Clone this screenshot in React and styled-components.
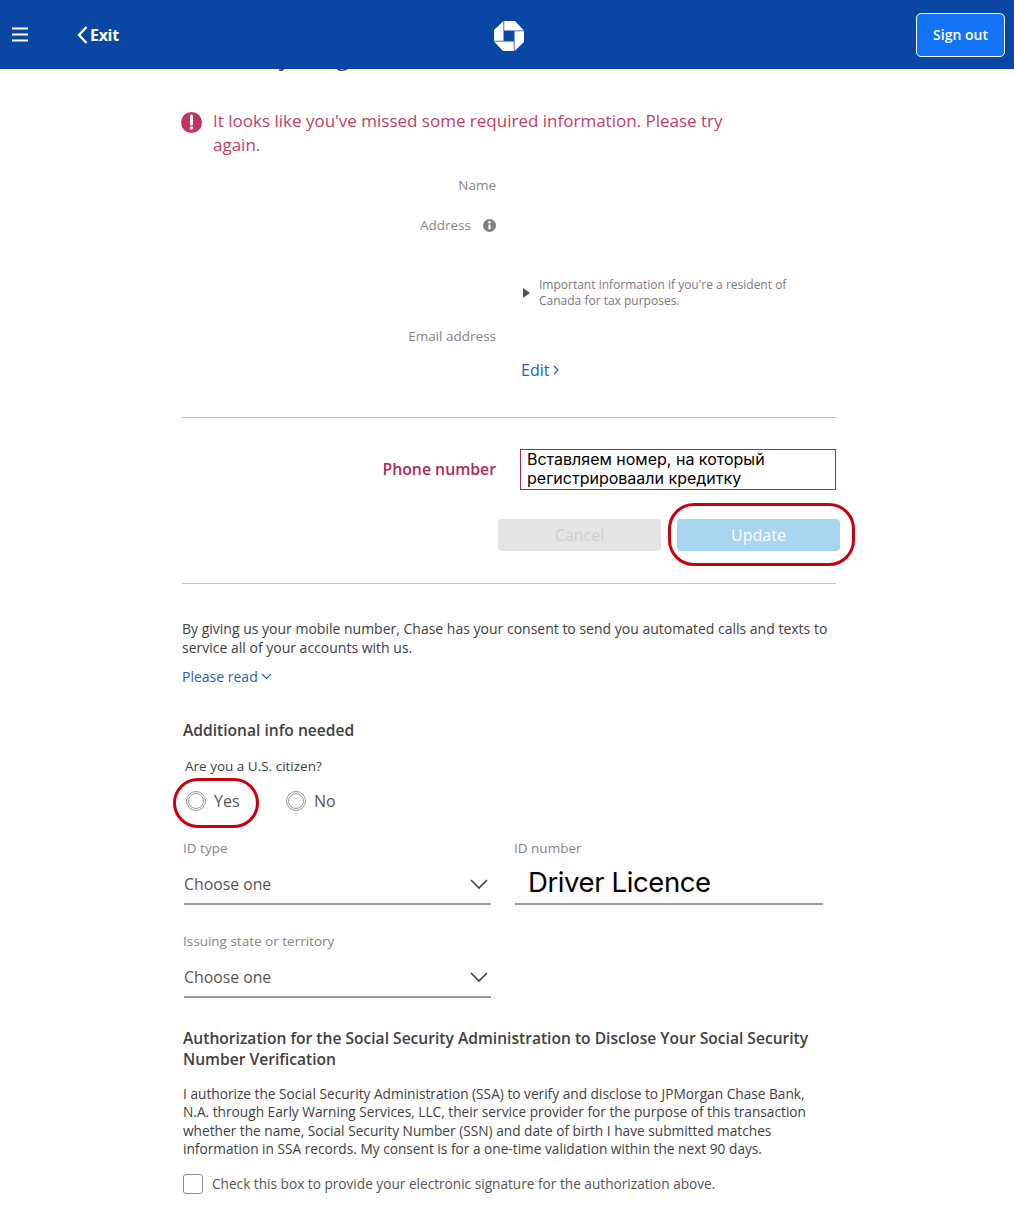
import React from "react";
import styled, { createGlobalStyle } from "styled-components";

const Global = createGlobalStyle`
  html, body { margin: 0; padding: 0; background: #fff; }
  body { font-family: "Open Sans", "Liberation Sans", sans-serif; color: #414042; overflow: hidden; height: 1215px; }
  * { box-sizing: border-box; }
`;

const Header = styled.header`
  position: relative; z-index: 2; height: 69px; background: #0a47a5;
  display: grid; grid-template-columns: 1fr auto 1fr; align-items: center; padding: 0 9px 0 12px;
`;
const HeaderLeft = styled.div`display: flex; align-items: center;`;
const Burger = styled.svg`width: 16px; height: 15px; display: block;`;
const ExitLink = styled.a`
  margin-left: 49px; display: flex; align-items: center; gap: 2px; color: #fff;
  font-size: 16px; font-weight: 700; letter-spacing: -0.3px;
`;
const Logo = styled.svg`width: 30px; height: 30px; display: block; margin-top: 2px;`;
const SignOut = styled.button`
  justify-self: end; width: 89px; height: 44px; background: #1273f5; color: #fff;
  border: 1px solid #fff; border-radius: 5px; font: 600 14px "Open Sans", sans-serif; padding: 0;
`;

const Main = styled.main`width: 654px; margin-left: 182px;`;
const HiddenHeading = styled.h1`
  margin: -30px 0 0; height: 33px; font-size: 24px; line-height: 33px; font-weight: 400; white-space: nowrap; color: #414042;
`;
const ErrorRow = styled.div`display: flex; gap: 11px; margin: 37px 0 0 -1px; width: 560px;`;
const ErrorIcon = styled.svg`width: 21px; height: 21px; flex: none; margin-top: 3px;`;
const ErrorText = styled.p`margin: 0; font-size: 17px; line-height: 24px; color: #bc3f66;`;

const FieldRow = styled.div`
  display: grid; grid-template-columns: 314px 1fr; column-gap: 25px; align-items: center; margin-top: ${p => p.$top}px;
`;
const FieldLabel = styled.div`
  display: flex; justify-content: flex-end; align-items: center; gap: 12px;
  font-size: 13.5px; line-height: 18px; color: #858585;
`;
const InfoIcon = styled.svg`width: 13px; height: 13px; margin-right: 0;`;
const ResidentNote = styled.div`
  display: flex; align-items: center; gap: 9px; margin: 43px 0 0 341px; width: 270px;
  font-size: 12px; line-height: 16px; color: #7a7a7a;
`;
const Triangle = styled.span`
  flex: none; width: 0; height: 0; border-left: 7px solid #505050; border-top: 5.5px solid transparent; border-bottom: 5.5px solid transparent;
`;
const EditLink = styled.a`
  display: flex; align-items: center; gap: 4px; margin: 14px 0 0 339px;
  font-size: 16px; line-height: 22px; color: #2b62a6;
`;
const Rule = styled.hr`border: 0; border-top: 1px solid #c4c4c4; margin: ${p => p.$top}px 0 0;`;
const PhoneRow = styled.div`
  display: grid; grid-template-columns: 314px 316px; column-gap: 24px; align-items: center; margin-top: 31px;
`;
const PhoneLabel = styled.label`text-align: right; font-size: 15.8px; font-weight: 600; color: #ad2a5b; padding-bottom: 2px;`;
const PhoneBox = styled.div`
  height: 41px; border: 1px solid #a02a5c; padding: 0 6px; font-family: Inter, "Noto Sans", sans-serif;
  font-size: 16px; line-height: 19px; color: #000;
`;
const ButtonRow = styled.div`display: flex; gap: 16px; margin: 29px -5px 0 316px;`;
const ActionBtn = styled.button`
  position: relative; width: 163px; height: 32px; border: 0; border-radius: 4px; padding: 0;
  font: 400 16px "Open Sans", sans-serif;
  background: ${p => (p.$primary ? "#a8d5ef" : "#e4e4e4")};
  color: ${p => (p.$primary ? "#fff" : "#cfcfcf")};
`;
const Oval = styled.span`
  position: absolute; border: 3.5px solid #c8010f; pointer-events: none;
  left: ${p => p.$l}px; top: ${p => p.$t}px; width: ${p => p.$w}px; height: ${p => p.$h}px; border-radius: ${p => p.$r}px;
`;
const Consent = styled.p`margin: 35px 0 0; font-size: 14px; line-height: 19px; color: #414042; width: 654px;`;
const ReadMore = styled.a`
  display: flex; align-items: center; gap: 3px; margin-top: 10px; font-size: 14px; line-height: 19px; color: #2b62a6;
`;
const SectionTitle = styled.h2`
  margin: ${p => p.$top}px 0 0 1px; font-size: 15.6px; line-height: 21px; font-weight: 600; color: #414042;
`;
const Question = styled.div`margin: 16px 0 0 3px; font-size: 13.5px; line-height: 18px; color: #414042;`;
const RadioRow = styled.div`display: flex; margin: 14px 0 0 4px; position: relative;`;
const RadioOption = styled.label`
  display: flex; align-items: center; gap: 8px; width: 100px; font-size: 16px; line-height: 24px; color: #555;
`;
const RadioMark = styled.span`
  width: 20px; height: 20px; border-radius: 50%; border: 1px solid #9a9a9a; display: grid; place-items: center;
  &::after { content: ""; width: 14px; height: 14px; border-radius: 50%; border: 1px solid #9a9a9a; }
`;
const TwoCols = styled.div`display: grid; grid-template-columns: 307px 308px; column-gap: 24px; margin: ${p => p.$top}px 0 0 2px;`;
const SelectField = styled.div`display: flex; flex-direction: column;`;
const SmallLabel = styled.div`font-size: 13.5px; line-height: 18px; color: #858585; margin-left: -1px;`;
const SelectBox = styled.div`
  height: 40px; margin-top: 8px; border-bottom: 2px solid #9c9c9c; display: flex; align-items: center; justify-content: space-between;
  padding: 0 3px 0 0; font-size: 15.8px; color: #555;
`;
const TypedBox = styled.div`
  height: 40px; margin-top: 8px; border-bottom: 2px solid #9c9c9c; padding-left: 13px; font-family: Inter, "Noto Sans", sans-serif;
  font-size: 27.5px; line-height: 34px; color: #000; letter-spacing: -0.4px;
`;
const Para = styled.p`margin: 15px 0 0 1px; font-size: 13.7px; line-height: 18.4px; color: #414042; width: 640px;`;
const CheckRow = styled.label`display: flex; align-items: center; gap: 9px; margin: 15px 0 0 1px; font-size: 13.65px; line-height: 20px; color: #555;`;
const CheckBox = styled.span`width: 20px; height: 20px; border: 1px solid #8d8d8d; border-radius: 3px;`;
const Chevron = styled.svg`display: block; flex: none;`;

const SelectChevron = () => (
  <Chevron width="18" height="10" viewBox="0 0 18 10" fill="none" stroke="#3c3c3c" strokeWidth="1.6"><path d="M1 1l8 8 8-8" /></Chevron>
);

export default function App() {
  return (
    <>
      <Global />
      <Header>
        <HeaderLeft>
          <Burger viewBox="0 0 16 15" stroke="#fff" strokeWidth="2"><path d="M0 1.5h16M0 7.5h16M0 13.5h16" /></Burger>
          <ExitLink>
            <Chevron width="11" height="18" viewBox="0 0 11 18" fill="none" stroke="#fff" strokeWidth="2.4"><path d="M9.5 1L2 9l7.5 8" /></Chevron>
            Exit
          </ExitLink>
        </HeaderLeft>
        <Logo viewBox="0 0 30 30" fill="#fff">
          <path d="M10.2 0H21l9 9.5H10.2z" />
          <path d="M30 10.2V21l-9.5 9V10.2z" />
          <path d="M19.8 30H9l-9-9.5h19.8z" />
          <path d="M0 19.8V9l9.5-9v19.8z" />
        </Logo>
        <SignOut>Sign out</SignOut>
      </Header>
      <Main>
        <HiddenHeading>Confirm your general info</HiddenHeading>
        <ErrorRow>
          <ErrorIcon viewBox="0 0 21 21">
            <circle cx="10.5" cy="10.5" r="10.5" fill="#c5325f" />
            <path d="M10.5 4v8" stroke="#fff" strokeWidth="3" strokeLinecap="round" />
            <circle cx="10.5" cy="16" r="1.8" fill="#fff" />
          </ErrorIcon>
          <ErrorText>It looks like you've missed some required information. Please try again.</ErrorText>
        </ErrorRow>
        <FieldRow $top={19}><FieldLabel>Name</FieldLabel></FieldRow>
        <FieldRow $top={22}>
          <FieldLabel>
            Address
            <InfoIcon viewBox="0 0 13 13">
              <circle cx="6.5" cy="6.5" r="6.5" fill="#808080" />
              <circle cx="6.5" cy="3.3" r="1.3" fill="#fff" />
              <path d="M6.5 5.6v4.6" stroke="#fff" strokeWidth="2.2" />
            </InfoIcon>
          </FieldLabel>
        </FieldRow>
        <ResidentNote>
          <Triangle />
          <span>Important information if you're a resident of Canada for tax purposes.</span>
        </ResidentNote>
        <FieldRow $top={18}><FieldLabel>Email address</FieldLabel></FieldRow>
        <EditLink>
          Edit
          <Chevron width="6" height="10" viewBox="0 0 6 10" fill="none" stroke="#2b62a6" strokeWidth="1.2"><path d="M1 1l4 4-4 4" /></Chevron>
        </EditLink>
        <Rule $top={36} />
        <PhoneRow>
          <PhoneLabel>Phone number</PhoneLabel>
          <PhoneBox>Вставляем номер, на который регистрироваали кредитку</PhoneBox>
        </PhoneRow>
        <ButtonRow>
          <ActionBtn>Cancel</ActionBtn>
          <ActionBtn $primary>
            Update
            <Oval $l={-9} $t={-16} $w={187} $h={63} $r={26} />
          </ActionBtn>
        </ButtonRow>
        <Rule $top={32} />
        <Consent>By giving us your mobile number, Chase has your consent to send you automated calls and texts to service all of your accounts with us.</Consent>
        <ReadMore>
          Please read
          <Chevron width="11" height="7" viewBox="0 0 11 7" fill="none" stroke="#2b62a6" strokeWidth="1.1"><path d="M1 1l4.5 4.5L10 1" /></Chevron>
        </ReadMore>
        <SectionTitle $top={34}>Additional info needed</SectionTitle>
        <Question>Are you a U.S. citizen?</Question>
        <RadioRow>
          <RadioOption><RadioMark />Yes</RadioOption>
          <RadioOption><RadioMark />No</RadioOption>
          <Oval $l={-13} $t={-11} $w={86} $h={50} $r={25} />
        </RadioRow>
        <TwoCols $top={26}>
          <SelectField>
            <SmallLabel>ID type</SmallLabel>
            <SelectBox>Choose one<SelectChevron /></SelectBox>
          </SelectField>
          <SelectField>
            <SmallLabel>ID number</SmallLabel>
            <TypedBox>Driver Licence</TypedBox>
          </SelectField>
        </TwoCols>
        <TwoCols $top={27}>
          <SelectField>
            <SmallLabel>Issuing state or territory</SmallLabel>
            <SelectBox>Choose one<SelectChevron /></SelectBox>
          </SelectField>
        </TwoCols>
        <SectionTitle $top={30}>Authorization for the Social Security Administration to Disclose Your Social Security Number Verification</SectionTitle>
        <Para>I authorize the Social Security Administration (SSA) to verify and disclose to JPMorgan Chase Bank, N.A. through Early Warning Services, LLC, their service provider for the purpose of this transaction whether the name, Social Security Number (SSN) and date of birth I have submitted matches information in SSA records. My consent is for a one-time validation within the next 90 days.</Para>
        <CheckRow><CheckBox />Check this box to provide your electronic signature for the authorization above.</CheckRow>
      </Main>
    </>
  );
}
